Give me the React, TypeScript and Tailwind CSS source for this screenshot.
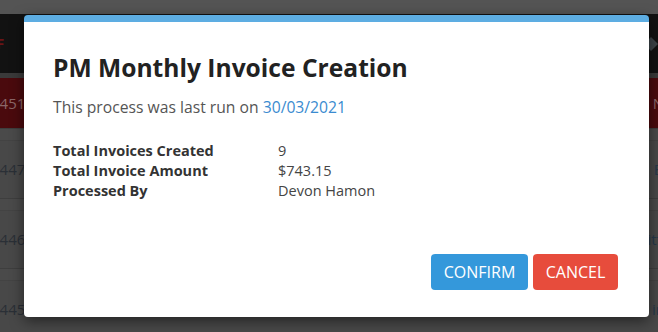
import React from "react";

const rows = [
  { id: "447", right: "E" },
  { id: "446", right: "itt" },
  { id: "445", right: "ir" },
];

function Backdrop() {
  return (
    <div className="flex h-full w-full flex-col bg-[#474747]">
      <div className="h-[14px] shrink-0 bg-[#545454]" />
      <div className="flex h-[59px] shrink-0 items-center justify-between bg-[#121212] pr-[2px]">
        <span className="-ml-[4px] text-[15px] font-bold text-[#6b1416]">F</span>
        <span className="h-[10px] w-[10px] rotate-45 bg-[#3c4448]" />
      </div>
      <div className="h-[5px] shrink-0 bg-[#3a3a3a]" />
      <div className="flex h-[50px] shrink-0 items-center justify-between bg-[#4a0a0d] text-[15px] text-[#8a6668]">
        <span className="-ml-[9px]">3451</span>
        <span className="-mr-[6px]">N</span>
      </div>
      {rows.map((r, i) => (
        <div key={r.id} className="flex shrink-0 flex-col">
          <div className="h-[12px] border-t border-[#3e3e3e] bg-[#4a4a4a]" />
          <div className="flex h-[58px] items-center justify-between border-t border-[#434343] bg-[#484848] text-[15px] text-[#2a2f36]">
            <span className="-ml-[9px]">3{r.id}</span>
            <span className="-mr-[4px] text-[#27384a]">{r.right}</span>
          </div>
          {i === 2 && (
            <div className="flex h-[20px] items-start bg-[#454545] text-[15px] leading-[20px] text-[#243447]">
              <span className="ml-[327px]">Services</span>
              <span className="ml-[112px] text-[#2a2f36]">000007445</span>
              <span className="ml-[27px]">RobertsT</span>
            </div>
          )}
        </div>
      ))}
    </div>
  );
}

export default function App() {
  return (
    <div
      className="relative h-[332px] w-[658px] overflow-hidden"
      style={{ fontFamily: '"Open Sans", "Liberation Sans", sans-serif' }}
    >
      <Backdrop />
      <div className="absolute inset-0 pl-[24px] pt-[15px]">
        <div className="flex h-[302px] w-[625px] flex-col rounded-[4px] border-t-[7px] border-[#5dade2] bg-white pl-[29px] pr-[31px] shadow-[0_4px_14px_rgba(0,0,0,0.5)]">
          <h2 className="mt-[30px] text-[24.6px] font-bold leading-[32px] text-[#222222]">
            PM Monthly Invoice Creation
          </h2>
          <p className="mt-[12px] text-[15.7px] leading-[22px] text-[#555555]">
            This process was last run on <span className="text-[#3a8bd0]">30/03/2021</span>
          </p>
          <div className="mt-[23px] grid grid-cols-[225px_1fr] text-[14.5px] leading-[20px]">
            <span className="font-bold text-[#333333]">Total Invoices Created</span>
            <span className="text-[#444444]">9</span>
            <span className="font-bold text-[#333333]">Total Invoice Amount</span>
            <span className="text-[#444444]">$743.15</span>
            <span className="font-bold text-[#333333]">Processed By</span>
            <span className="text-[#444444]">Devon Hamon</span>
          </div>
          <div className="mt-auto mb-[27px] flex justify-end gap-[5px]">
            <button className="h-[36px] w-[97px] rounded-[4px] bg-[#3498db] text-[16px] text-white">
              CONFIRM
            </button>
            <button className="h-[36px] w-[85px] rounded-[4px] bg-[#e74c3c] text-[16px] text-white">
              CANCEL
            </button>
          </div>
        </div>
      </div>
    </div>
  );
}
